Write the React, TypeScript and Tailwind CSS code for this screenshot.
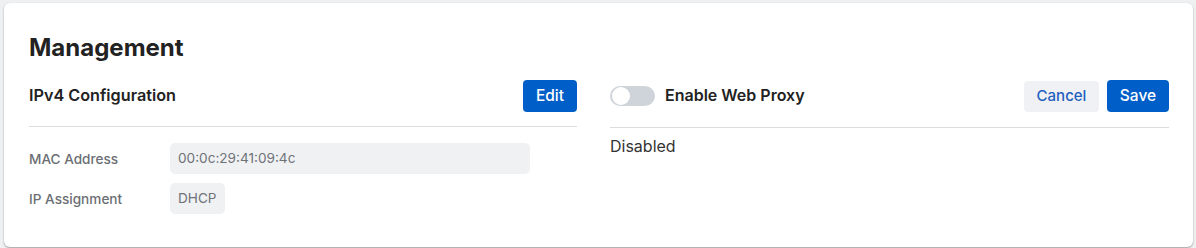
export default function App() {
  return (
    <div className="w-[1196px] h-[248px] bg-[#eef0f2] pt-[3px] pl-[4px] pr-[3px] font-['Inter','Noto_Sans',sans-serif]">
      <div className="h-[244px] bg-white rounded-[6px] shadow-[0_1px_2px_rgba(0,0,0,0.35)] pl-[25px] pr-[24px] pt-[29px]">
        <h1 className="text-[24px] leading-[32px] font-bold text-[#222]">Management</h1>
        <div className="flex gap-[33px] mt-[15px]">
          <div className="w-[548px]">
            <div className="flex items-center justify-between h-[33px] border-b border-[#dcdcdc] box-content pb-[14px]">
              <div className="text-[16.2px] font-semibold text-[#222] -mt-[1px]">IPv4 Configuration</div>
              <button className="h-[32px] w-[54px] rounded-[4px] bg-[#005ec8] text-white text-[15.5px] font-medium">Edit</button>
            </div>
            <div className="mt-[16px] flex flex-col gap-[9px]">
              <div className="flex items-center">
                <div className="w-[141px] text-[13.6px] font-medium text-[#6b6e73] mt-[1px]">MAC Address</div>
                <div className="w-[360px] h-[31px] rounded-[5px] bg-[#f0f1f3] px-[8px] flex items-center text-[13.6px] text-[#6f7378]">00:0c:29:41:09:4c</div>
              </div>
              <div className="flex items-center">
                <div className="w-[141px] text-[13.6px] font-medium text-[#6b6e73] mt-[1px]">IP Assignment</div>
                <div className="h-[31px] rounded-[5px] bg-[#f0f1f3] px-[8px] flex items-center text-[13.6px] text-[#6f7378]">DHCP</div>
              </div>
            </div>
          </div>
          <div className="flex-1">
            <div className="flex items-center justify-between h-[33px] border-b border-[#dcdcdc] box-content pb-[15px]">
              <div className="flex items-center gap-[10px]">
                <div className="w-[45px] h-[20px] rounded-full bg-[#cfd4da] px-[2px] flex items-center">
                  <div className="w-[18px] h-[18px] rounded-full bg-white" />
                </div>
                <div className="text-[16px] font-semibold text-[#222] -mt-[2px]">Enable Web Proxy</div>
              </div>
              <div className="flex items-center gap-[8px]">
                <button className="h-[31px] w-[75px] rounded-[4px] bg-[#eff1f4] text-[#1f5fbf] text-[15px] font-medium mt-[1px]">Cancel</button>
                <button className="h-[32px] w-[62px] rounded-[4px] bg-[#005ec8] text-white text-[15.5px] font-medium">Save</button>
              </div>
            </div>
            <div className="mt-[6px] text-[16px] text-[#333]">Disabled</div>
          </div>
        </div>
      </div>
    </div>
  );
}
